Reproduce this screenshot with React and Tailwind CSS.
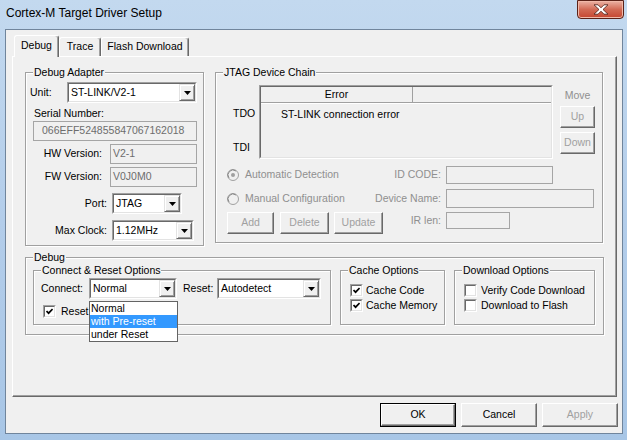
import React from 'react';

// Windows classic style bits
const Arrow = () => (
  <svg width="7" height="4" viewBox="0 0 7 4">
    <path d="M0 0h7L3.5 4z" fill="#000" />
  </svg>
);

function Combo({ value, className }) {
  return (
    <div className={`flex h-[21px] border border-t-[#a0a0a0] border-l-[#a0a0a0] border-r-white border-b-white ${className}`}>
      <div className="flex flex-1 border border-t-[#696969] border-l-[#696969] border-r-[#e3e3e3] border-b-[#e3e3e3] bg-white">
        <span className="flex-1 pl-[2px] leading-[17px] whitespace-nowrap overflow-hidden">{value}</span>
        <div className="w-[16px] flex items-center justify-center bg-[#f0f0f0] border border-t-[#e3e3e3] border-l-[#e3e3e3] border-r-[#696969] border-b-[#696969] shadow-[inset_1px_1px_0_#fff,inset_-1px_-1px_0_#a0a0a0]">
          <Arrow />
        </div>
      </div>
    </div>
  );
}

function Field({ value, className }) {
  return (
    <div className={`border border-[#a5a5a5] bg-[#f0f0f0] pl-[6px] text-[#6d6d6d] leading-[17px] whitespace-nowrap ${className}`}>
      {value}
    </div>
  );
}

function Btn({ children, className, disabled, def }) {
  const inner = (
    <div
      className={`flex h-full w-full items-center justify-center border border-t-white border-l-white border-r-[#696969] border-b-[#696969] shadow-[inset_-1px_-1px_0_#a0a0a0] ${
        disabled ? 'text-[#a0a0a0]' : 'text-black'
      }`}
    >
      {children}
    </div>
  );
  if (def) {
    return <div className={`border border-black ${className}`}>{inner}</div>;
  }
  return <div className={className}>{inner}</div>;
}

function Check({ checked }) {
  return (
    <div className="w-[13px] h-[13px] shrink-0 border border-t-[#a0a0a0] border-l-[#a0a0a0] border-r-white border-b-white">
      <div className="w-full h-full flex items-center justify-center bg-white border border-t-[#696969] border-l-[#696969] border-r-[#e3e3e3] border-b-[#e3e3e3]">
        {checked && (
          <svg width="7" height="7" viewBox="0 0 7 7">
            <path d="M0.5 3 L2.6 5.2 L6.6 1" stroke="#000" strokeWidth="1.7" fill="none" />
          </svg>
        )}
      </div>
    </div>
  );
}

function Radio({ checked }) {
  return (
    <svg width="12" height="12" viewBox="0 0 12 12" className="shrink-0">
      <circle cx="6" cy="6" r="5.5" fill="#f0f0f0" stroke="#a0a0a0" />
      <path d="M2 9A5 5 0 0 1 9 2" stroke="#8a8a8a" fill="none" />
      {checked && <circle cx="6" cy="6" r="2" fill="#a0a0a0" />}
    </svg>
  );
}

function Group({ label, className = '', children }) {
  return (
    <div className={`flex flex-col border border-[#a0a0a0] shadow-[inset_1px_1px_0_#fff,1px_1px_0_#fff] ${className}`}>
      <span className="-mt-[7px] ml-[7px] self-start bg-[#f0f0f0] px-[1px] leading-[13px]">{label}</span>
      {children}
    </div>
  );
}

function Tab({ label, selected, className }) {
  return (
    <div
      className={`flex items-center justify-center rounded-t-[3px] border-t border-l border-r border-t-white border-l-white border-r-[#696969] bg-[#f0f0f0] shadow-[inset_-1px_0_0_#a0a0a0] ${
        selected ? 'h-[22px] pb-[2px]' : 'h-[19px] mb-[1px]'
      } ${className}`}
    >
      {label}
    </div>
  );
}

export default function App() {
  return (
    <div className="w-[627px] h-[440px] flex flex-col overflow-hidden bg-gradient-to-b from-[#c3d9ef] via-[#b3cdea] to-[#a8c6e6] text-[10.5px] text-black font-[family-name:Liberation_Sans,Arial,sans-serif]">
      {/* title bar */}
      <div className="flex h-[29px] shrink-0 items-start">
        <span className="pl-[6px] pt-[6px] text-[12px] leading-[15px] text-black">Cortex-M Target Driver Setup</span>
        <div className="ml-auto mr-[3px] flex h-[19px] w-[47px] items-center justify-center rounded-b-[4px] border border-[#5b2218] bg-gradient-to-b from-[#eab2a4] via-[#d26a55] to-[#c5452f] shadow-[inset_0_0_0_1px_#f1b9a9]">
          <svg width="16" height="11" viewBox="0 0 16 11">
            <path
              d="M1 0.8h4l3 3 3-3h4l-5 4.7 5 4.7h-4l-3-3-3 3H1l5-4.7z"
              fill="#fff"
              stroke="#4a1a12"
              strokeWidth="0.8"
              strokeLinejoin="round"
            />
          </svg>
        </div>
      </div>

      {/* client area */}
      <div className="ml-[5px] flex h-[405px] w-[618px] shrink-0 flex-col border border-[#70859c] bg-[#f0f0f0] pt-[5px]">
        {/* tabs */}
        <div className="relative z-10 ml-[8px] flex h-[22px] items-end">
          <Tab label="Debug" selected className="w-[45px]" />
          <Tab label="Trace" className="w-[42px]" />
          <Tab label="Flash Download" className="w-[88px]" />
        </div>

        {/* tab panel */}
        <div className="-mt-[1px] ml-[6px] flex h-[341px] w-[605px] flex-col border border-t-white border-l-white border-r-[#696969] border-b-[#696969] pl-[12px] pt-[15px] shadow-[inset_-1px_-1px_0_#a0a0a0]">
          <div className="flex items-start">
            {/* Debug Adapter */}
            <Group label="Debug Adapter" className="w-[179px] pb-[4px]">
              <div className="mt-[3px] flex items-center">
                <span className="w-[41px] pl-[4px]">Unit:</span>
                <Combo value="ST-LINK/V2-1" className="w-[130px]" />
              </div>
              <span className="mt-[4px] pl-[8px] leading-[13px]">Serial Number:</span>
              <Field value="066EFF524855847067162018" className="ml-[7px] mt-[1px] h-[20px] w-[164px] !pl-[8px]" />
              <div className="mt-[3px] flex items-center">
                <span className="w-[76px] text-right">HW Version:</span>
                <Field value="V2-1" className="ml-[8px] h-[20px] w-[87px] !pl-[2px]" />
              </div>
              <div className="mt-[3px] flex items-center">
                <span className="w-[76px] text-right">FW Version:</span>
                <Field value="V0J0M0" className="ml-[8px] h-[20px] w-[87px] !pl-[2px]" />
              </div>
              <div className="mt-[6px] flex items-center">
                <span className="w-[81px] text-right">Port:</span>
                <Combo value="JTAG" className="ml-[5px] w-[70px]" />
              </div>
              <div className="mt-[6px] flex items-center">
                <span className="w-[81px] text-right">Max Clock:</span>
                <Combo value="1.12MHz" className="ml-[5px] w-[82px]" />
              </div>
            </Group>

            {/* JTAG Device Chain */}
            <Group label="JTAG Device Chain" className="ml-[11px] w-[388px] pb-[8px]">
              <div className="mt-[6px] flex items-start">
                <div className="flex w-[43px] flex-col pl-[17px] leading-[13px]">
                  <span className="mt-[22px]">TDO</span>
                  <span className="mt-[21px]">TDI</span>
                </div>
                <div className="h-[74px] w-[294px] border border-t-[#a0a0a0] border-l-[#a0a0a0] border-r-white border-b-white">
                  <div className="flex h-full flex-col border border-t-[#696969] border-l-[#696969] border-r-[#e3e3e3] border-b-[#e3e3e3] bg-[#f0f0f0]">
                    <div className="flex h-[16px] border-b border-[#a0a0a0] shadow-[0_1px_0_#fff]">
                      <span className="w-[152px] border-r border-[#a0a0a0] text-center leading-[15px]">Error</span>
                    </div>
                    <span className="mt-[5px] pl-[20px] leading-[13px]">ST-LINK connection error</span>
                  </div>
                </div>
                <div className="ml-[7px] flex w-[35px] flex-col">
                  <span className="mt-[4px] text-center leading-[13px] text-[#8f8f8f]">Move</span>
                  <Btn disabled className="mt-[4px] h-[22px]">Up</Btn>
                  <Btn disabled className="mt-[4px] h-[22px]">Down</Btn>
                </div>
              </div>

              <div className="mt-[7px] flex h-[18px] items-center">
                <div className="flex w-[225px] items-center justify-between pl-[11px] text-[#8f8f8f]">
                  <div className="flex items-center">
                    <Radio checked />
                    <span className="ml-[6px]">Automatic Detection</span>
                  </div>
                  <span>ID CODE:</span>
                </div>
                <Field value="" className="ml-[5px] h-[18px] w-[107px]" />
              </div>
              <div className="mt-[5px] flex h-[19px] items-center">
                <div className="flex w-[225px] items-center justify-between pl-[11px] text-[#8f8f8f]">
                  <div className="flex items-center">
                    <Radio />
                    <span className="ml-[6px]">Manual Configuration</span>
                  </div>
                  <span>Device Name:</span>
                </div>
                <Field value="" className="ml-[5px] h-[19px] w-[148px]" />
              </div>
              <div className="mt-[4px] flex h-[22px] items-start">
                <div className="flex w-[225px] items-start justify-between pl-[11px] text-[#8f8f8f]">
                  <div className="flex">
                    <Btn disabled className="h-[22px] w-[47px]">Add</Btn>
                    <Btn disabled className="ml-[6px] h-[22px] w-[49px]">Delete</Btn>
                    <Btn disabled className="ml-[5px] h-[22px] w-[49px]">Update</Btn>
                  </div>
                  <span className="mt-[2px] leading-[13px]">IR len:</span>
                </div>
                <Field value="" className="ml-[5px] h-[17px] w-[64px]" />
              </div>
            </Group>
          </div>

          {/* Debug group */}
          <Group label="Debug" className="mt-[11px] w-[579px] pb-[9px]">
            <div className="mt-[6px] flex items-start pl-[7px]">
              <Group label="Connect & Reset Options" className="w-[298px] pb-[6px]">
                <div className="mt-[1px] flex items-center">
                  <span className="w-[55px] pl-[7px]">Connect:</span>
                  <div className="relative">
                    <Combo value="Normal" className="w-[88px]" />
                    <div className="absolute left-0 top-[23px] z-20 flex w-[89px] flex-col border border-[#646464] bg-white">
                      <span className="h-[13px] pl-[1px] leading-[13px]">Normal</span>
                      <span className="h-[13px] bg-[#3399ff] pl-[1px] leading-[13px] text-white">with Pre-reset</span>
                      <span className="h-[13px] pl-[1px] leading-[13px]">under Reset</span>
                    </div>
                  </div>
                  <span className="ml-[6px] w-[34px]">Reset:</span>
                  <Combo value="Autodetect" className="w-[104px]" />
                </div>
                <div className="mt-[6px] flex items-center pl-[9px]">
                  <Check checked />
                  <span className="ml-[5px] leading-[13px]">Reset</span>
                </div>
              </Group>

              <Group label="Cache Options" className="ml-[9px] w-[105px] pb-[12px]">
                <div className="mt-[7px] flex items-center pl-[9px]">
                  <Check checked />
                  <span className="ml-[3px] leading-[13px]">Cache Code</span>
                </div>
                <div className="mt-[2px] flex items-center pl-[9px]">
                  <Check checked />
                  <span className="ml-[3px] leading-[13px]">Cache Memory</span>
                </div>
              </Group>

              <Group label="Download Options" className="ml-[9px] w-[141px] pb-[12px]">
                <div className="mt-[7px] flex items-center pl-[9px]">
                  <Check />
                  <span className="ml-[4px] leading-[13px]">Verify Code Download</span>
                </div>
                <div className="mt-[2px] flex items-center pl-[9px]">
                  <Check />
                  <span className="ml-[4px] leading-[13px]">Download to Flash</span>
                </div>
              </Group>
            </div>
          </Group>
        </div>

        {/* dialog buttons */}
        <div className="mt-[6px] flex justify-end pr-[4px]">
          <Btn def className="h-[24px] w-[76px]">OK</Btn>
          <Btn className="ml-[5px] h-[24px] w-[76px]">Cancel</Btn>
          <Btn disabled className="ml-[5px] h-[24px] w-[76px]">Apply</Btn>
        </div>
      </div>
    </div>
  );
}
